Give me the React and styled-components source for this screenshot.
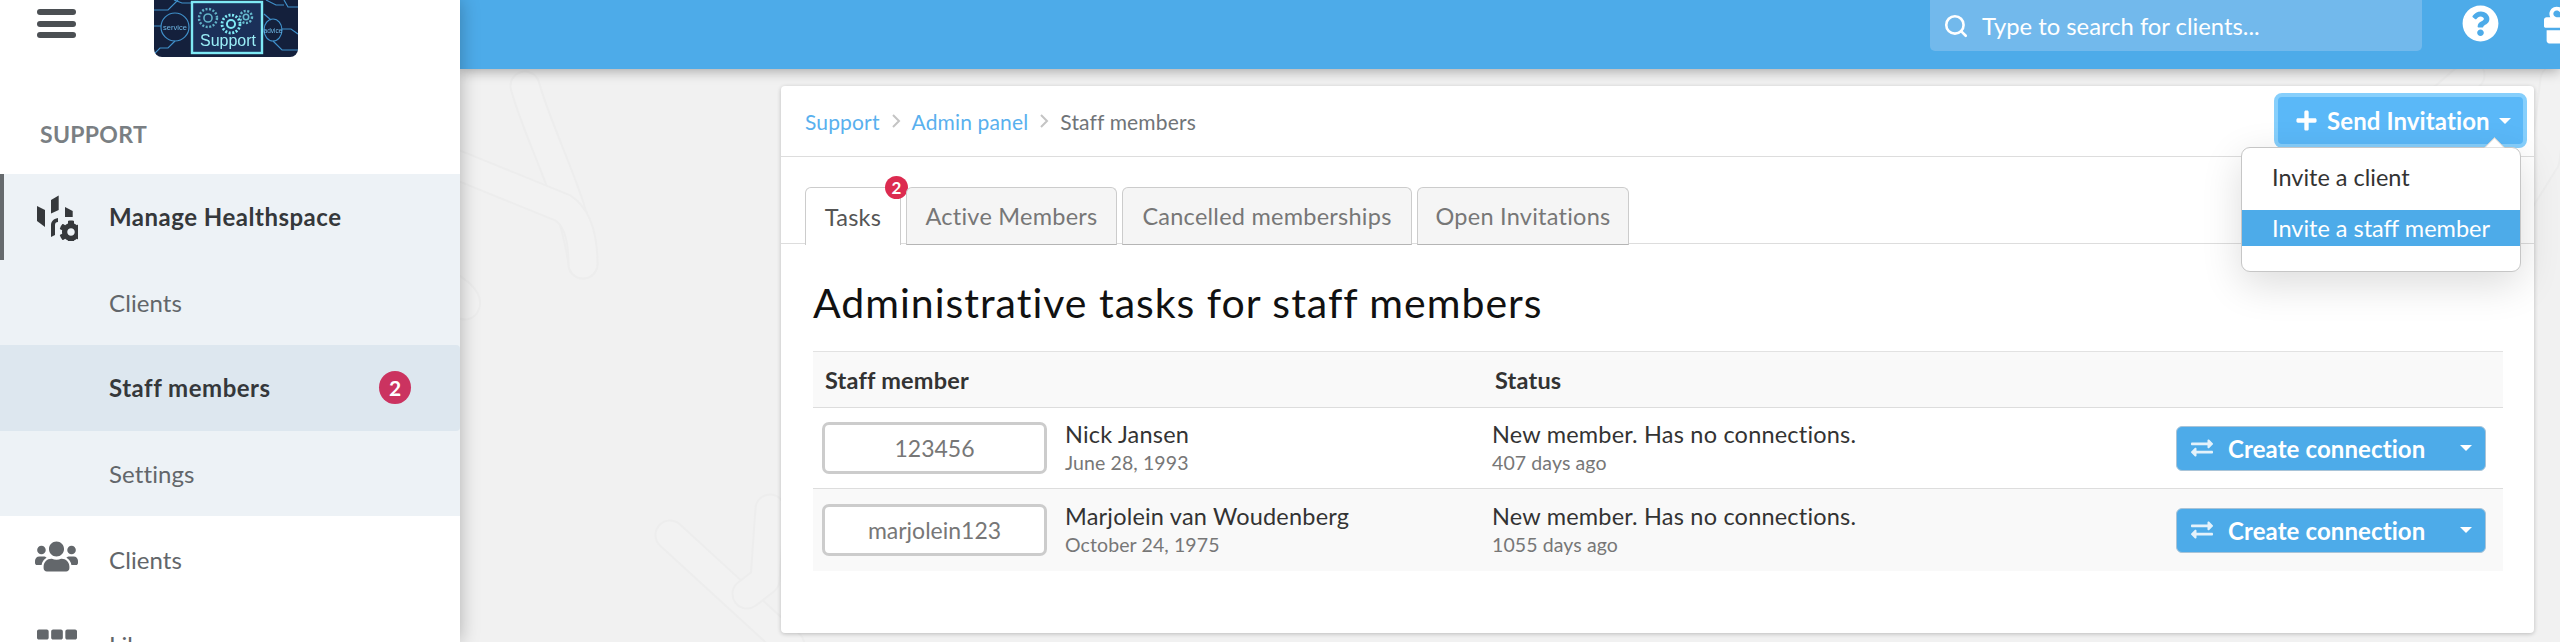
import React from 'react';
import styled, { createGlobalStyle } from 'styled-components';
import { FaUsers, FaTh, FaQuestionCircle, FaGift, FaExchangeAlt, FaPlus, FaCog } from 'react-icons/fa';
import { Search as SearchIcon } from 'lucide-react';

const Global = createGlobalStyle`
  html, body { margin: 0; padding: 0; background: #f1f1f1; }
  body { font-family: "Lato", "Open Sans", Arial, sans-serif; color: #333; }
  * { box-sizing: border-box; }
`;

const Page = styled.div`
  display: flex; width: 2560px; height: 642px; overflow: hidden; background: #f1f1f1;
`;
const Sidebar = styled.aside`
  width: 460px; flex: none; height: 642px; background: #fff; z-index: 3;
  box-shadow: 0 0 18px rgba(0,0,0,.28); overflow: hidden;
`;
const SideHead = styled.div`
  display: flex; align-items: flex-start; height: 57px; padding-left: 37px;
`;
const Burger = styled.div`
  display: flex; flex-direction: column; gap: 5.5px; width: 39px; padding-top: 9px;
  span { display: block; height: 6px; border-radius: 3px; background: #4b4f53; }
`;
const LogoBox = styled.div`
  margin-left: 78px; width: 144px; height: 57px; border-radius: 0 0 8px 8px; overflow: hidden; filter: blur(.35px);
  svg { display: block; }
`;
const SectionLabel = styled.div`
  margin: 60px 0 0 40px; height: 57px; font-size: 23px; font-weight: 700; color: #7a7f83; line-height: 34px; letter-spacing: .3px;
`;
const SubGroup = styled.div`background: #edf2f6;`;
const NavRow = styled.div`
  position: relative; display: flex; align-items: center; height: 85.6px; padding: 0 49px 0 109px;
  font-size: 24px;
  letter-spacing: ${p => (p.$strong ? '.5px' : '.1px')};
  font-weight: ${p => (p.$strong ? 700 : 400)};
  color: ${p => (p.$strong ? '#35383b' : '#62666a')};
  background: ${p => (p.$selected ? '#dde7ef' : 'transparent')};
  border-radius: ${p => (p.$selected ? '0 4px 4px 0' : '0')};
  border-left: ${p => (p.$marked ? '4px solid #666a6d' : '0')};
  padding-left: ${p => (p.$marked ? '105px' : '109px')};
`;
const NavIcon = styled.span`
  position: absolute; left: ${p => p.$left}px; top: ${p => p.$top}px; display: flex; color: #63676b;
`;
const ManageIcon = styled.svg`
  position: absolute; left: 32px; top: 20px; color: #35383b;
`;
const Count = styled.span`
  margin-left: auto; width: 32px; height: 33px; border-radius: 50%; background: #cb3360; color: #fff;
  display: flex; align-items: center; justify-content: center; font-size: 21px; font-weight: 700; letter-spacing: 0;
`;

const Main = styled.main`
  position: relative; flex: 1; min-width: 0; display: flex; flex-direction: column;
`;
const Pattern = styled.svg`
  position: absolute; left: 0; top: 0; z-index: 0;
`;
const TopBar = styled.header`
  position: relative; z-index: 2; flex: none; height: 69px; background: #4dabe9;
  box-shadow: 0 2px 12px rgba(0,0,0,.32); display: flex; align-items: flex-start;
  padding-left: 1470px; color: #fff;
`;
const Search = styled.div`
  flex: none; width: 492px; height: 51px; background: #72b9ec; border-radius: 0 0 5px 5px;
  display: flex; align-items: center; padding-left: 13px; gap: 13px; font-size: 23.8px; color: #fff;
`;
const HelpBtn = styled.span`
  flex: none; margin: 5px 0 0 40px; display: flex;
`;
const GiftBtn = styled.span`
  flex: none; margin: 4px 0 0 45px; display: flex;
`;

const Panel = styled.section`
  position: relative; z-index: 1; margin: 17px 0 0 321px; width: 1753px; height: 547px;
  background: #fff; border-radius: 4px; box-shadow: 0 1px 4px rgba(0,0,0,.22);
`;
const PanelHead = styled.div`
  position: relative; z-index: 2; height: 71px; border-bottom: 1px solid #ddd; display: flex; align-items: flex-start;
  padding: 0 7px 0 24px;
`;
const Crumbs = styled.nav`
  display: flex; align-items: center; height: 70px; gap: 11px; font-size: 21px; color: #707478; letter-spacing: .15px;
  a { color: #59b0ee; }
  svg { color: #c4c4c4; }
`;
const SendWrap = styled.div`
  position: relative; margin: 7px 0 0 auto;
`;
const SendBtn = styled.button`
  display: flex; align-items: center; width: 253px; height: 55px; padding: 0 0 0 17px; margin: 0;
  background: #5ab8f8; border: 4px solid #86cffc; border-radius: 8px; color: #fff;
  font: 700 24px "Lato", sans-serif; letter-spacing: .1px;
  svg { margin-right: 9px; flex: none; }
`;
const Caret = styled.i`
  display: block; width: 0; height: 0; border-left: 6px solid transparent; border-right: 6px solid transparent;
  border-top: 6px solid #fff; margin-left: ${p => p.$gap}px;
`;
const Menu = styled.div`
  position: absolute; left: -33px; top: 54px; width: 280px; height: 125px; background: #fff;
  border: 1px solid #c6c6c6; border-radius: 9px; box-shadow: 0 12px 40px rgba(0,0,0,.14); padding-top: 8px;
  font-size: 23.5px; letter-spacing: 0; color: #333;
  &::before {
    content: ''; position: absolute; right: 18px; top: -8px; width: 14px; height: 14px; background: #fff;
    border-left: 1px solid #c6c6c6; border-top: 1px solid #c6c6c6; transform: rotate(45deg);
    clip-path: polygon(0 0, 100% 0, 0 100%);
  }
`;
const MenuItem = styled.div`
  height: 36px; line-height: 36px; padding-left: 30px;
  margin-top: ${p => (p.$active ? '15px' : '3px')};
  color: ${p => (p.$active ? '#fff' : '#333')};
  background: ${p => (p.$active ? '#4dabe9' : 'transparent')};
`;
const Tabs = styled.div`
  display: flex; gap: 5px; height: 57px; margin-top: 30px; padding-left: 24px; border-bottom: 1px solid #ddd;
`;
const Tab = styled.div`
  position: relative; width: ${p => p.$w}px; height: 58px; display: flex; align-items: center; justify-content: center;
  font-size: 23.5px; letter-spacing: .25px; color: ${p => (p.$active ? '#555' : '#777')};
  background: ${p => (p.$active ? '#fff' : '#f5f5f5')};
  border: 1px solid #ccc; border-bottom: ${p => (p.$active ? '0' : '1px solid #b5b5b5')}; border-radius: 6px 6px 0 0;
`;
const TabBadge = styled.span`
  position: absolute; right: -8px; top: -12px; width: 23px; height: 23px; border-radius: 50%; background: #dc2b50; color: #fff;
  display: flex; align-items: center; justify-content: center; font-size: 17px; font-weight: 700;
`;
const Title = styled.h1`
  margin: 0 0 0 32px; height: 107px; padding-top: 35px; font-size: 41px; line-height: 48px; font-weight: 400; color: #111; letter-spacing: 1px;
`;
const Table = styled.div`
  margin-left: 32px; width: 1690px; border-top: 1px solid #e2e2e2;
`;
const HeadRow = styled.div`
  display: grid; grid-template-columns: 670px 1fr; align-items: center; height: 56px; background: #f9f9f9;
  border-bottom: 1px solid #ddd; padding-left: 12px; font-size: 23.5px; font-weight: 700; color: #333; letter-spacing: .2px;
`;
const Row = styled.div`
  display: grid; grid-template-columns: 225px 445px 1fr auto; align-items: center; height: ${p => p.$h}px;
  padding: 0 17px 0 9px; background: ${p => (p.$alt ? '#f9f9f9' : '#fff')};
  border-bottom: ${p => (p.$alt ? '0' : '1px solid #ddd')};
`;
const Username = styled.div`
  height: 52px; border: 3px solid #ccc; border-radius: 7px; background: #fff; display: flex; align-items: center; justify-content: center;
  font-size: 23px; color: #777;
`;
const Person = styled.div`padding-left: 18px;`;
const Primary = styled.div`font-size: 23.5px; line-height: 30px; color: #333; letter-spacing: .2px;`;
const Secondary = styled.div`font-size: 19.5px; line-height: 28px; color: #777; letter-spacing: .1px;`;
const ConnectBtn = styled.button`
  display: flex; align-items: center; width: 310px; height: 45px; padding: 0 0 0 14px; margin: 0;
  background: #4dabe9; border: 1px solid #a9c4d8; border-radius: 6px; color: #fff;
  font: 700 24px "Lato", sans-serif; letter-spacing: .1px;
  svg { opacity: .85; margin-right: 15px; flex: none; }
`;

const Gear = ({ cx, cy, r, w = 1.2, op = 1 }) => (
  <g stroke="#7fe9f5" fill="none" opacity={op}>
    <circle cx={cx} cy={cy} r={r} strokeWidth={w + 1.2} strokeDasharray="2 1.6" />
    <circle cx={cx} cy={cy} r={r * 0.45} strokeWidth={w + 0.4} />
  </g>
);

const Logo = () => (
  <svg width="144" height="57" viewBox="0 0 144 57">
    <rect width="144" height="57" fill="#14203c" />
    <g stroke="#3f8fc9" fill="none" strokeWidth="1.2">
      <path d="M0 10 H14 L24 0" />
      <path d="M0 26 H7" />
      <circle cx="21" cy="27" r="14" />
      <path d="M21 41 L14 48 H6 L0 54" />
      <path d="M110 14 L117 20" />
      <ellipse cx="119" cy="30" rx="9" ry="11" />
      <path d="M128 29 H137 L144 34" />
      <path d="M119 41 L128 50 H144" />
      <path d="M112 0 L122 5 H130" />
      <path d="M130 0 L134 7 H144" />
      <path d="M37 3 H28 L20 0" />
    </g>
    <rect x="38" y="2" width="70" height="51" fill="#1b3059" stroke="#7fe9f5" strokeWidth="2.4" />
    <Gear cx={54} cy={18} r={9} op={0.7} />
    <Gear cx={77} cy={24} r={9} w={1.6} />
    <Gear cx={92} cy={17} r={6} op={0.75} />
    <text x="74" y="46" textAnchor="middle" fontFamily="Liberation Sans" fontSize="16" fill="#9aeef7">Support</text>
    <text x="21" y="30" textAnchor="middle" fontFamily="Liberation Sans" fontSize="7.5" fill="#6fb8e6">service</text>
    <text x="119" y="33" textAnchor="middle" fontFamily="Liberation Sans" fontSize="6.5" fill="#6fb8e6">advice</text>
  </svg>
);

const Stroke = ({ d }) => (
  <>
    <path d={d} stroke="#ededed" strokeWidth="31" fill="none" strokeLinecap="round" strokeLinejoin="round" />
    <path d={d} stroke="#f2f2f2" strokeWidth="27" fill="none" strokeLinecap="round" strokeLinejoin="round" />
  </>
);

const Rows = [
  { id: '123456', name: 'Nick Jansen', dob: 'June 28, 1993', ago: '407 days ago', h: 81 },
  { id: 'marjolein123', name: 'Marjolein van Woudenberg', dob: 'October 24, 1975', ago: '1055 days ago', h: 82, alt: true },
];

const Chevron = () => (
  <svg width="10" height="16" viewBox="0 0 10 16" fill="none" stroke="currentColor" strokeWidth="2"><path d="M2 2 L8 8 L2 14" /></svg>
);

export default function App() {
  return (
    <Page>
      <Global />
      <Sidebar>
        <SideHead>
          <Burger><span /><span /><span /></Burger>
          <LogoBox><Logo /></LogoBox>
        </SideHead>
        <SectionLabel>SUPPORT</SectionLabel>
        <SubGroup>
          <NavRow $strong $marked>
            <ManageIcon width="42" height="47" viewBox="0 0 42 47" fill="currentColor">
              <polygon points="1,12 9,16 9,33 1,27" />
              <polygon points="15,6 22.7,1.5 22.7,16 15,19.5" />
              <polygon points="29,13 36.7,17 36.7,23 29,23" />
              <path d="M22 24 C17 25 15 28 15 31 L15 43 L19 41 L19 31 C19 29 20 28 22 28 Z" />
              <FaCog x="23" y="26" width="18" height="18" />
            </ManageIcon>
            Manage Healthspace
          </NavRow>
          <NavRow>Clients</NavRow>
          <NavRow $strong $selected>Staff members<Count>2</Count></NavRow>
          <NavRow>Settings</NavRow>
        </SubGroup>
        <NavRow>
          <NavIcon $left={35} $top={19}><FaUsers size={43} /></NavIcon>
          Clients
        </NavRow>
        <NavRow>
          <NavIcon $left={37} $top={25}><FaTh size={40} /></NavIcon>
          Library
        </NavRow>
      </Sidebar>
      <Main>
        <Pattern width="2100" height="642" viewBox="460 0 2100 642">
          <Stroke d="M525 86 C540 140 575 200 583 264" />
          <Stroke d="M440 158 L563 208 C578 218 583 240 583 264" />
          <Stroke d="M440 280 C455 290 468 298 465 305" />
          <Stroke d="M670 535 L790 645" />
          <Stroke d="M770 509 L765 580 L747 594" />
          <Stroke d="M2470 75 L2430 110" />
          <Stroke d="M2555 80 L2545 160 L2520 200" />
        </Pattern>
        <TopBar>
          <Search>
            <SearchIcon size={26} strokeWidth={2.4} />
            Type to search for clients...
          </Search>
          <HelpBtn><FaQuestionCircle size={37} /></HelpBtn>
          <GiftBtn><FaGift size={42} /></GiftBtn>
        </TopBar>
        <Panel>
          <PanelHead>
            <Crumbs>
              <a>Support</a>
              <Chevron />
              <a>Admin panel</a>
              <Chevron />
              <span>Staff members</span>
            </Crumbs>
            <SendWrap>
              <SendBtn>
                <FaPlus size={23} />
                Send Invitation
                <Caret $gap={9} />
              </SendBtn>
              <Menu>
                <MenuItem>Invite a client</MenuItem>
                <MenuItem $active>Invite a staff member</MenuItem>
              </Menu>
            </SendWrap>
          </PanelHead>
          <Tabs>
            <Tab $w={96} $active>Tasks<TabBadge>2</TabBadge></Tab>
            <Tab $w={211}>Active Members</Tab>
            <Tab $w={290}>Cancelled memberships</Tab>
            <Tab $w={212}>Open Invitations</Tab>
          </Tabs>
          <Title>Administrative tasks for staff members</Title>
          <Table>
            <HeadRow><span>Staff member</span><span>Status</span></HeadRow>
            {Rows.map(r => (
              <Row key={r.id} $h={r.h} $alt={r.alt}>
                <Username>{r.id}</Username>
                <Person>
                  <Primary>{r.name}</Primary>
                  <Secondary>{r.dob}</Secondary>
                </Person>
                <div>
                  <Primary>New member. Has no connections.</Primary>
                  <Secondary>{r.ago}</Secondary>
                </div>
                <ConnectBtn>
                  <FaExchangeAlt size={22} />
                  Create connection
                  <Caret $gap={35} />
                </ConnectBtn>
              </Row>
            ))}
          </Table>
        </Panel>
      </Main>
    </Page>
  );
}
